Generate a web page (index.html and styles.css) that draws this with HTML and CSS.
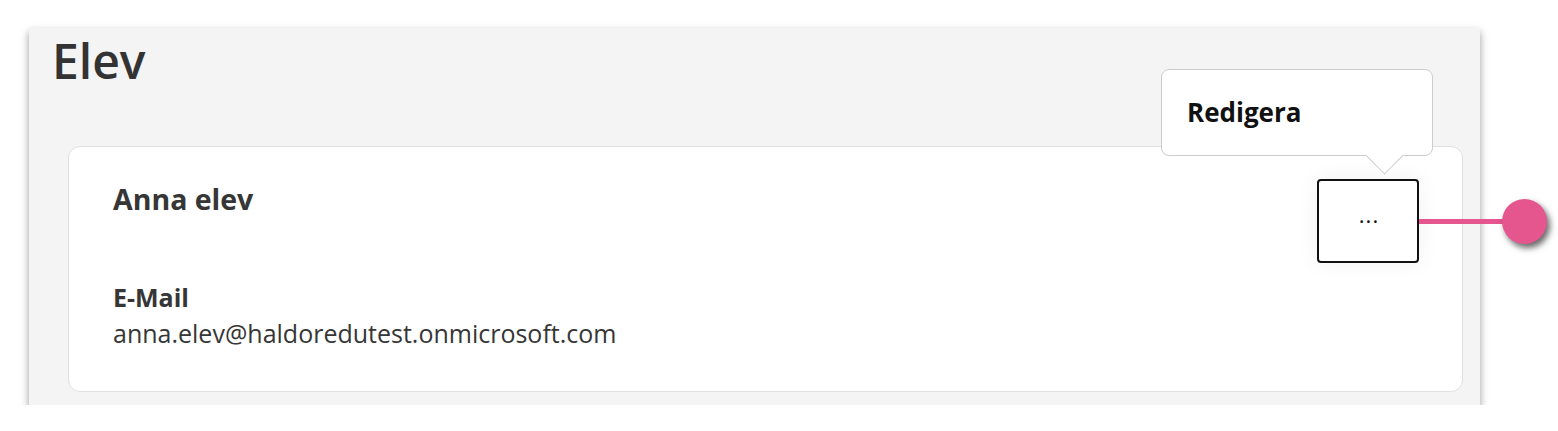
FILE: index.html
```html
<!DOCTYPE html>
<html lang="sv">

<head>
    <meta charset="UTF-8">
    <meta name="viewport" content="width=device-width, initial-scale=1.0">
    <title>Elev</title>
    <link rel="stylesheet" href="styles.css">
</head>

<body>
    <div class="panel">
        <h1 class="page-title">Elev</h1>

        <div class="card">
            <div class="card-header">
                <h2 class="student-name">Anna elev</h2>

                <div class="menu-wrap">
                    <button class="menu-button">&middot;&middot;&middot;</button>

                    <!-- tooltip shown over the card -->
                    <div class="tooltip">Redigera</div>

                    <!-- annotation marker -->
                    <div class="marker-line"></div>
                    <div class="marker-dot"></div>
                </div>
            </div>

            <div class="field">
                <div class="field-label">E-Mail</div>
                <div class="field-value">anna.elev@haldoredutest.onmicrosoft.com</div>
            </div>
        </div>
    </div>
</body>

</html>
```

FILE: styles.css
```css
body {
    font-family: "Open Sans", "Liberation Sans", sans-serif;
    background-color: #fff;
    color: #333;
    margin: 0;
    padding: 0;
}

.panel {
    width: 1451px;
    margin: 28px 0 0 29px;
    padding-bottom: 13px;
    background: #f4f4f4;
    box-shadow: 0 4px 8px rgba(0, 0, 0, 0.4);
}

.page-title {
    margin: 0;
    padding-left: 23px;
    font-size: 48px;
    font-weight: 600;
    line-height: normal;
    color: #333;
}

.card {
    margin: 53px 17px 0 39px;
    padding: 32px 43px 40px 44px;
    background: #fff;
    border: 1px solid #e0e0e0;
    border-radius: 12px;
}

.card-header {
    display: flex;
    justify-content: space-between;
    align-items: flex-start;
}

.student-name {
    margin: 1px 0 0;
    font-size: 28.5px;
    font-weight: 700;
    line-height: normal;
    color: #363636;
}

.menu-wrap {
    position: relative;
}

.menu-button {
    display: block;
    width: 102px;
    height: 84px;
    padding: 0 0 2px 2px;
    background: #fff;
    border: 2px solid #111;
    border-radius: 4px;
    font-family: inherit;
    font-size: 22px;
    letter-spacing: 1px;
    color: #111;
    box-shadow: 0 0 24px rgba(0, 0, 0, 0.06);
    cursor: pointer;
}

.tooltip {
    position: absolute;
    left: -156px;
    top: -110px;
    width: 272px;
    height: 87px;
    box-sizing: border-box;
    padding: 24px 25px;
    background: #fff;
    border: 1px solid #ccc;
    border-radius: 8px;
    font-size: 26px;
    font-weight: 700;
    line-height: normal;
    color: #111;
}

.tooltip::after {
    content: "";
    position: absolute;
    left: 209px;
    bottom: -14px;
    width: 26px;
    height: 26px;
    background: #fff;
    border-right: 1px solid #ccc;
    border-bottom: 1px solid #ccc;
    transform: rotate(45deg);
}

.marker-line {
    position: absolute;
    left: 102px;
    top: 40px;
    width: 90px;
    height: 5px;
    background: #e5568f;
}

.marker-dot {
    position: absolute;
    left: 185px;
    top: 20px;
    width: 45px;
    height: 45px;
    border-radius: 50%;
    background: #e5568f;
    box-shadow: 3px 4px 6px rgba(0, 0, 0, 0.6);
}

.field {
    margin-top: 16px;
}

.field-label {
    font-size: 25px;
    font-weight: 700;
    line-height: 36px;
    color: #363636;
}

.field-value {
    font-size: 25px;
    line-height: 36px;
    color: #363636;
}
```
